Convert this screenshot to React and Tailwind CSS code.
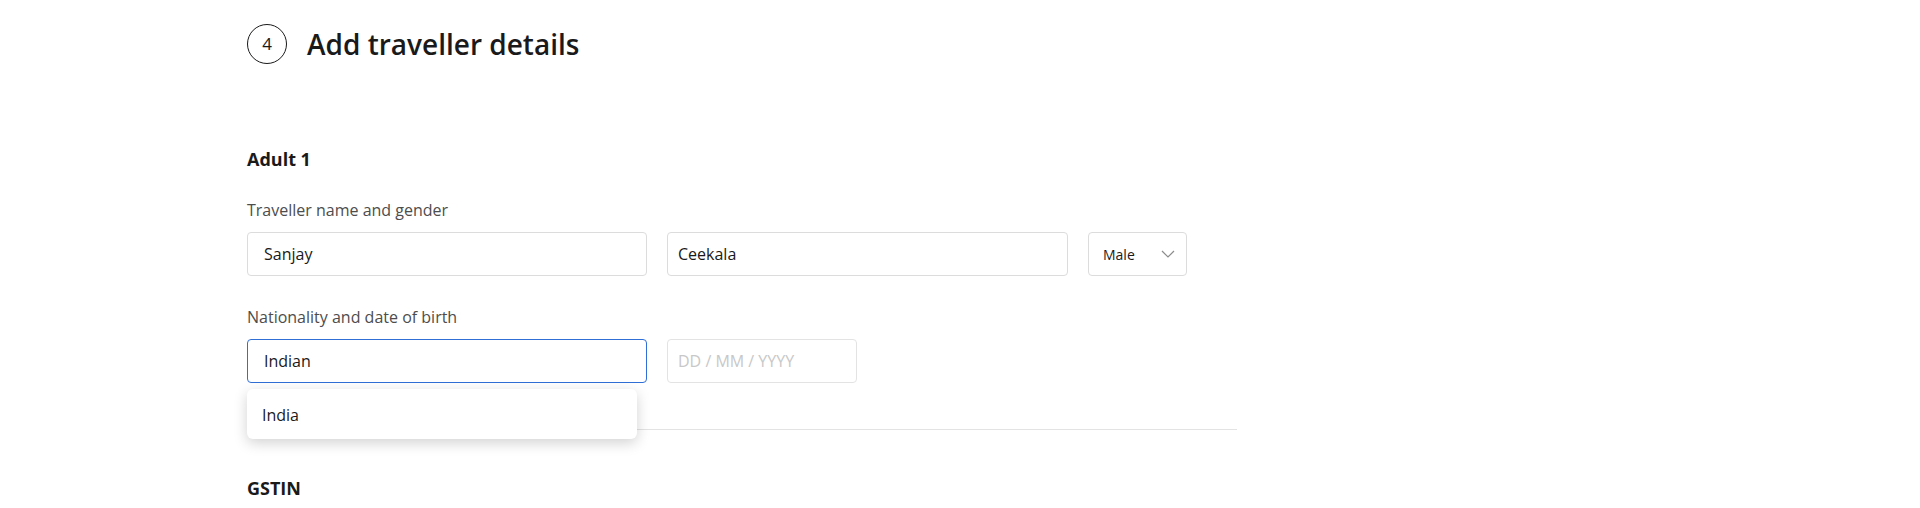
import { useState } from "react";

const font = { fontFamily: '"Open Sans", "Noto Sans", sans-serif' };

export default function App() {
  const [first, setFirst] = useState("Sanjay");
  const [last, setLast] = useState("Ceekala");
  const [nationality, setNationality] = useState("Indian");

  return (
    <div className="min-h-screen bg-white text-[#1a1a1a]" style={font}>
      <div className="ml-[247px] w-[990px] pt-[24px]">
        <div className="flex items-center gap-5">
          <div className="flex h-10 w-10 items-center justify-center rounded-full border border-[#1a1a1a] text-[17px]">
            4
          </div>
          <h2 className="text-[28px] font-semibold leading-none">Add traveller details</h2>
        </div>

        <h3 className="mt-[83px] text-[18px] font-bold leading-6">Adult 1</h3>

        <label className="mt-[29px] block text-[16px] leading-5 text-[#4d4d4d]">
          Traveller name and gender
        </label>
        <div className="mt-[12px] flex gap-5">
          <input
            value={first}
            onChange={(e) => setFirst(e.target.value)}
            className="h-11 w-[400px] rounded border border-[#dcdcdc] px-4 text-[16px] outline-none"
          />
          <input
            value={last}
            onChange={(e) => setLast(e.target.value)}
            className="h-11 w-[401px] rounded border border-[#dcdcdc] px-[10px] text-[16px] outline-none"
          />
          <div className="flex h-11 w-[99px] items-center justify-between rounded border border-[#dcdcdc] pl-[14px] pr-[11px] text-[14px]">
            <span>Male</span>
            <svg width="14" height="8" viewBox="0 0 14 8" fill="none">
              <path d="M1 1l6 6 6-6" stroke="#8c8c8c" strokeWidth="1.2" />
            </svg>
          </div>
        </div>

        <label className="mt-[31px] block text-[16px] leading-5 text-[#4d4d4d]">
          Nationality and date of birth
        </label>
        <div className="mt-[12px] flex gap-5">
          <div className="relative">
            <input
              value={nationality}
              onChange={(e) => setNationality(e.target.value)}
              className="h-11 w-[400px] rounded border border-[#2f6fd6] px-4 text-[16px] outline-none"
            />
            <div className="absolute left-0 top-[50px] z-10 flex h-[50px] w-[390px] items-center rounded-md bg-white px-[15px] pt-[2px] text-[16px] shadow-[0_4px_14px_rgba(0,0,0,0.18)]">
              India
            </div>
          </div>
          <input
            placeholder="DD / MM / YYYY"
            className="h-11 w-[190px] rounded border border-[#e3e3e3] px-[10px] text-[16px] outline-none placeholder:text-[#c8c8c8]"
          />
        </div>

        <div className="mt-[46px] border-t border-[#e3e3e3]" />

        <h3 className="mt-[46px] text-[18px] font-bold leading-6">GSTIN</h3>
      </div>
    </div>
  );
}
